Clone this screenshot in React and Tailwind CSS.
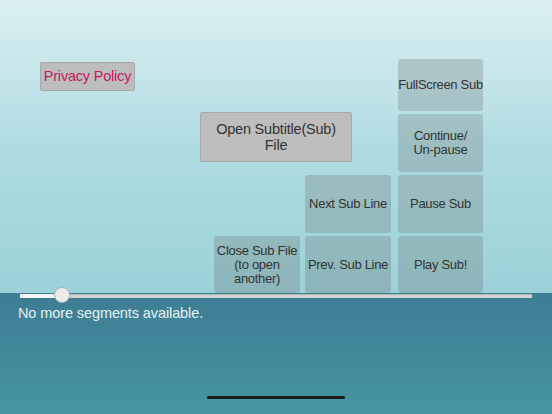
import React from 'react';

const FONT = { fontFamily: '"Liberation Sans", Arial, sans-serif' };

// semi-transparent tiles on the right
function Tile({ className = '', children }) {
  return (
    <div className={`flex items-center justify-center text-center whitespace-nowrap rounded-[3px] bg-[rgba(100,100,100,0.25)] text-[#333333] text-[13px] tracking-[-0.3px] leading-[14px] ${className}`}>
      {children}
    </div>
  );
}

export default function App() {
  return (
    <div className="w-[552px] h-[414px] flex flex-col overflow-hidden" style={FONT}>
      {/* top canvas */}
      <div className="h-[293px] bg-linear-to-b from-[#dcf0f3] via-[#afdce1] to-[#9bd2d7] flex pt-[59px]">
        <div className="ml-[40px] mt-[3px] w-[95px] h-[29px] flex items-center justify-center rounded-[2px] bg-[#bdbdbd] border border-[#a9a9a9] text-[#c8175d] text-[14.5px] tracking-[-0.2px]">
          Privacy Policy
        </div>

        <div className="ml-[65px] grid grid-cols-[14px_86px_5px_86px_7px_85px] grid-rows-[52px_58px_58px_57px] gap-y-[3px]">
          <Tile className="col-start-6 row-start-1">FullScreen Sub</Tile>

          <div className="col-start-1 col-span-4 row-start-2 -mt-[2px] w-[152px] h-[50px] flex items-center justify-center text-center rounded-[2px] bg-[#bdbdbd] border border-[#aaaaaa] text-[#333333] text-[14.5px] tracking-[-0.2px] leading-[16px]">
            Open Subtitle(Sub)<br />File
          </div>
          <Tile className="col-start-6 row-start-2">Continue/<br />Un-pause</Tile>

          <Tile className="col-start-4 row-start-3">Next Sub Line</Tile>
          <Tile className="col-start-6 row-start-3">Pause Sub</Tile>

          <Tile className="col-start-2 row-start-4">Close Sub File<br />(to open<br />another)</Tile>
          <Tile className="col-start-4 row-start-4">Prev. Sub Line</Tile>
          <Tile className="col-start-6 row-start-4">Play Sub!</Tile>
        </div>
      </div>

      {/* bottom band */}
      <div className="flex-1 flex flex-col bg-linear-to-b from-[#3e7d94] to-[#4594a2]">
        <div className="relative mt-[1px] mx-[20px] h-[4px] bg-[#d2d2d2] border-t border-[#b8b8b8]">
          <div className="absolute left-0 top-[-1px] h-[4px] w-[42px] bg-[#f4f4f4]" />
          <div className="absolute left-[34px] top-[-8px] w-[16px] h-[16px] rounded-full bg-[#ececec] border border-[#b0b0b0]" />
        </div>
        <div className="mt-[7px] ml-[18px] text-[14.5px] tracking-[-0.1px] leading-[16px] text-[#e8f1f3]">
          No more segments available.
        </div>
        <div className="mt-auto mb-[15px] mx-auto w-[138px] h-[3px] rounded-full bg-[#1c1c1c]" />
      </div>
    </div>
  );
}
